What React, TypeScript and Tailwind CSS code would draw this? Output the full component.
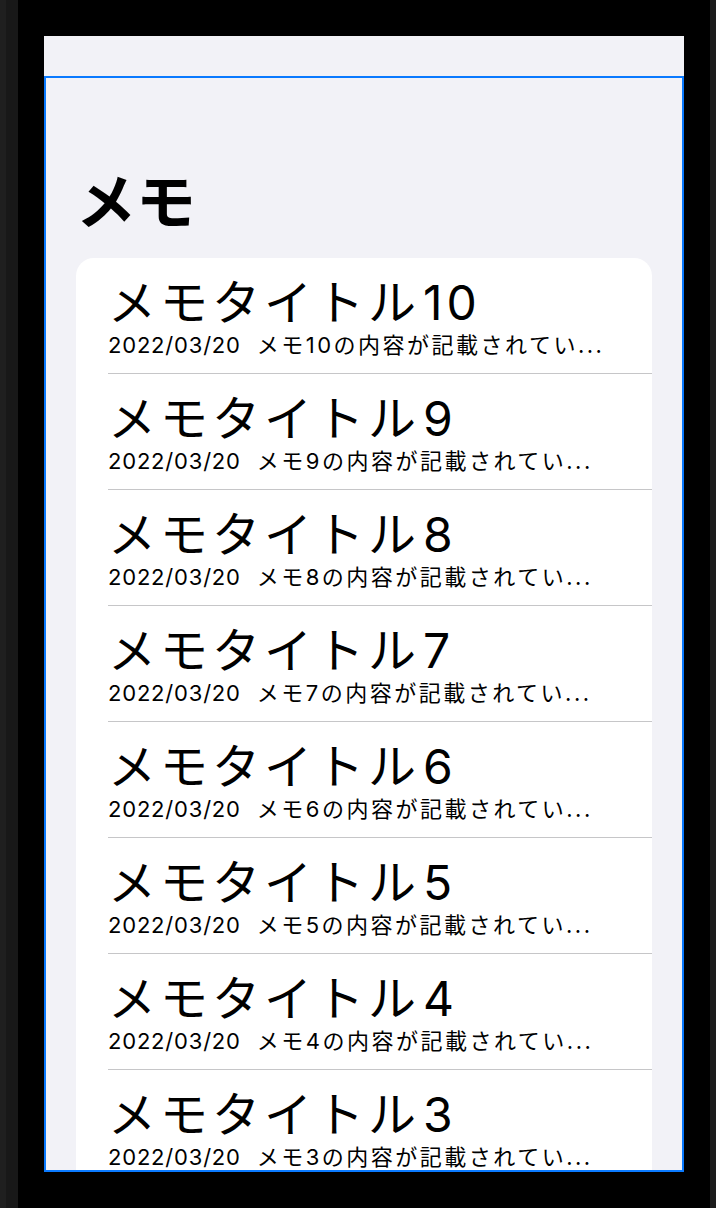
const memos = [10, 9, 8, 7, 6, 5, 4, 3, 2, 1].map((n) => ({
  id: n,
  title: "メモタイトル",
  num: String(n),
  date: "2022/03/20",
  body: `メモ${n}の内容が記載されてい...`,
}));

function MemoRow({ title, num, date, body }: { title: string; num: string; date: string; body: string }) {
  return (
    <div className="ml-[32px] border-b border-[#c6c6c8] pt-[17px] pb-[14px] flex flex-col shrink-0">
      <div className="text-[48px] leading-[56px] text-black whitespace-nowrap">
        <span className="tracking-[4px]">{title}</span>
        <span className="ml-[3px] tracking-[4px]">{num}</span>
      </div>
      <div className="flex items-center gap-[16px] text-[22px] leading-[28px] text-black whitespace-nowrap">
        <span className="tracking-[0.8px]">{date}</span>
        <span className="tracking-[2.5px]">{body}</span>
      </div>
    </div>
  );
}

export default function App() {
  return (
    <div
      className="w-[716px] h-[1208px] bg-black flex overflow-hidden"
      style={{ fontFamily: 'Inter, "Noto Sans CJK JP", sans-serif' }}
    >
      {/* window chrome strips */}
      <div className="w-[6px] h-full bg-[#1f1f1f]" />
      <div className="w-[12px] h-full bg-[#181818]" />
      <div className="w-[26px]" />

      {/* device screen */}
      <div className="w-[640px] flex flex-col pt-[36px]">
        <div className="h-[40px] bg-[#f2f2f7] shrink-0" />
        <div className="h-[1096px] bg-[#f2f2f7] border-2 border-[#0a7aff] overflow-hidden flex flex-col">
          <div className="pt-[88px] pl-[30px] h-[180px] shrink-0">
            <h1 className="text-[60px] leading-[72px] font-bold text-black">メモ</h1>
          </div>
          <div className="mx-[30px] bg-white rounded-[18px] flex flex-col shrink-0">
            {memos.map((m) => (
              <MemoRow key={m.id} title={m.title} num={m.num} date={m.date} body={m.body} />
            ))}
          </div>
        </div>
      </div>

      <div className="w-[26px]" />
      <div className="w-[6px] h-full bg-[#1c1c1c]" />
    </div>
  );
}
